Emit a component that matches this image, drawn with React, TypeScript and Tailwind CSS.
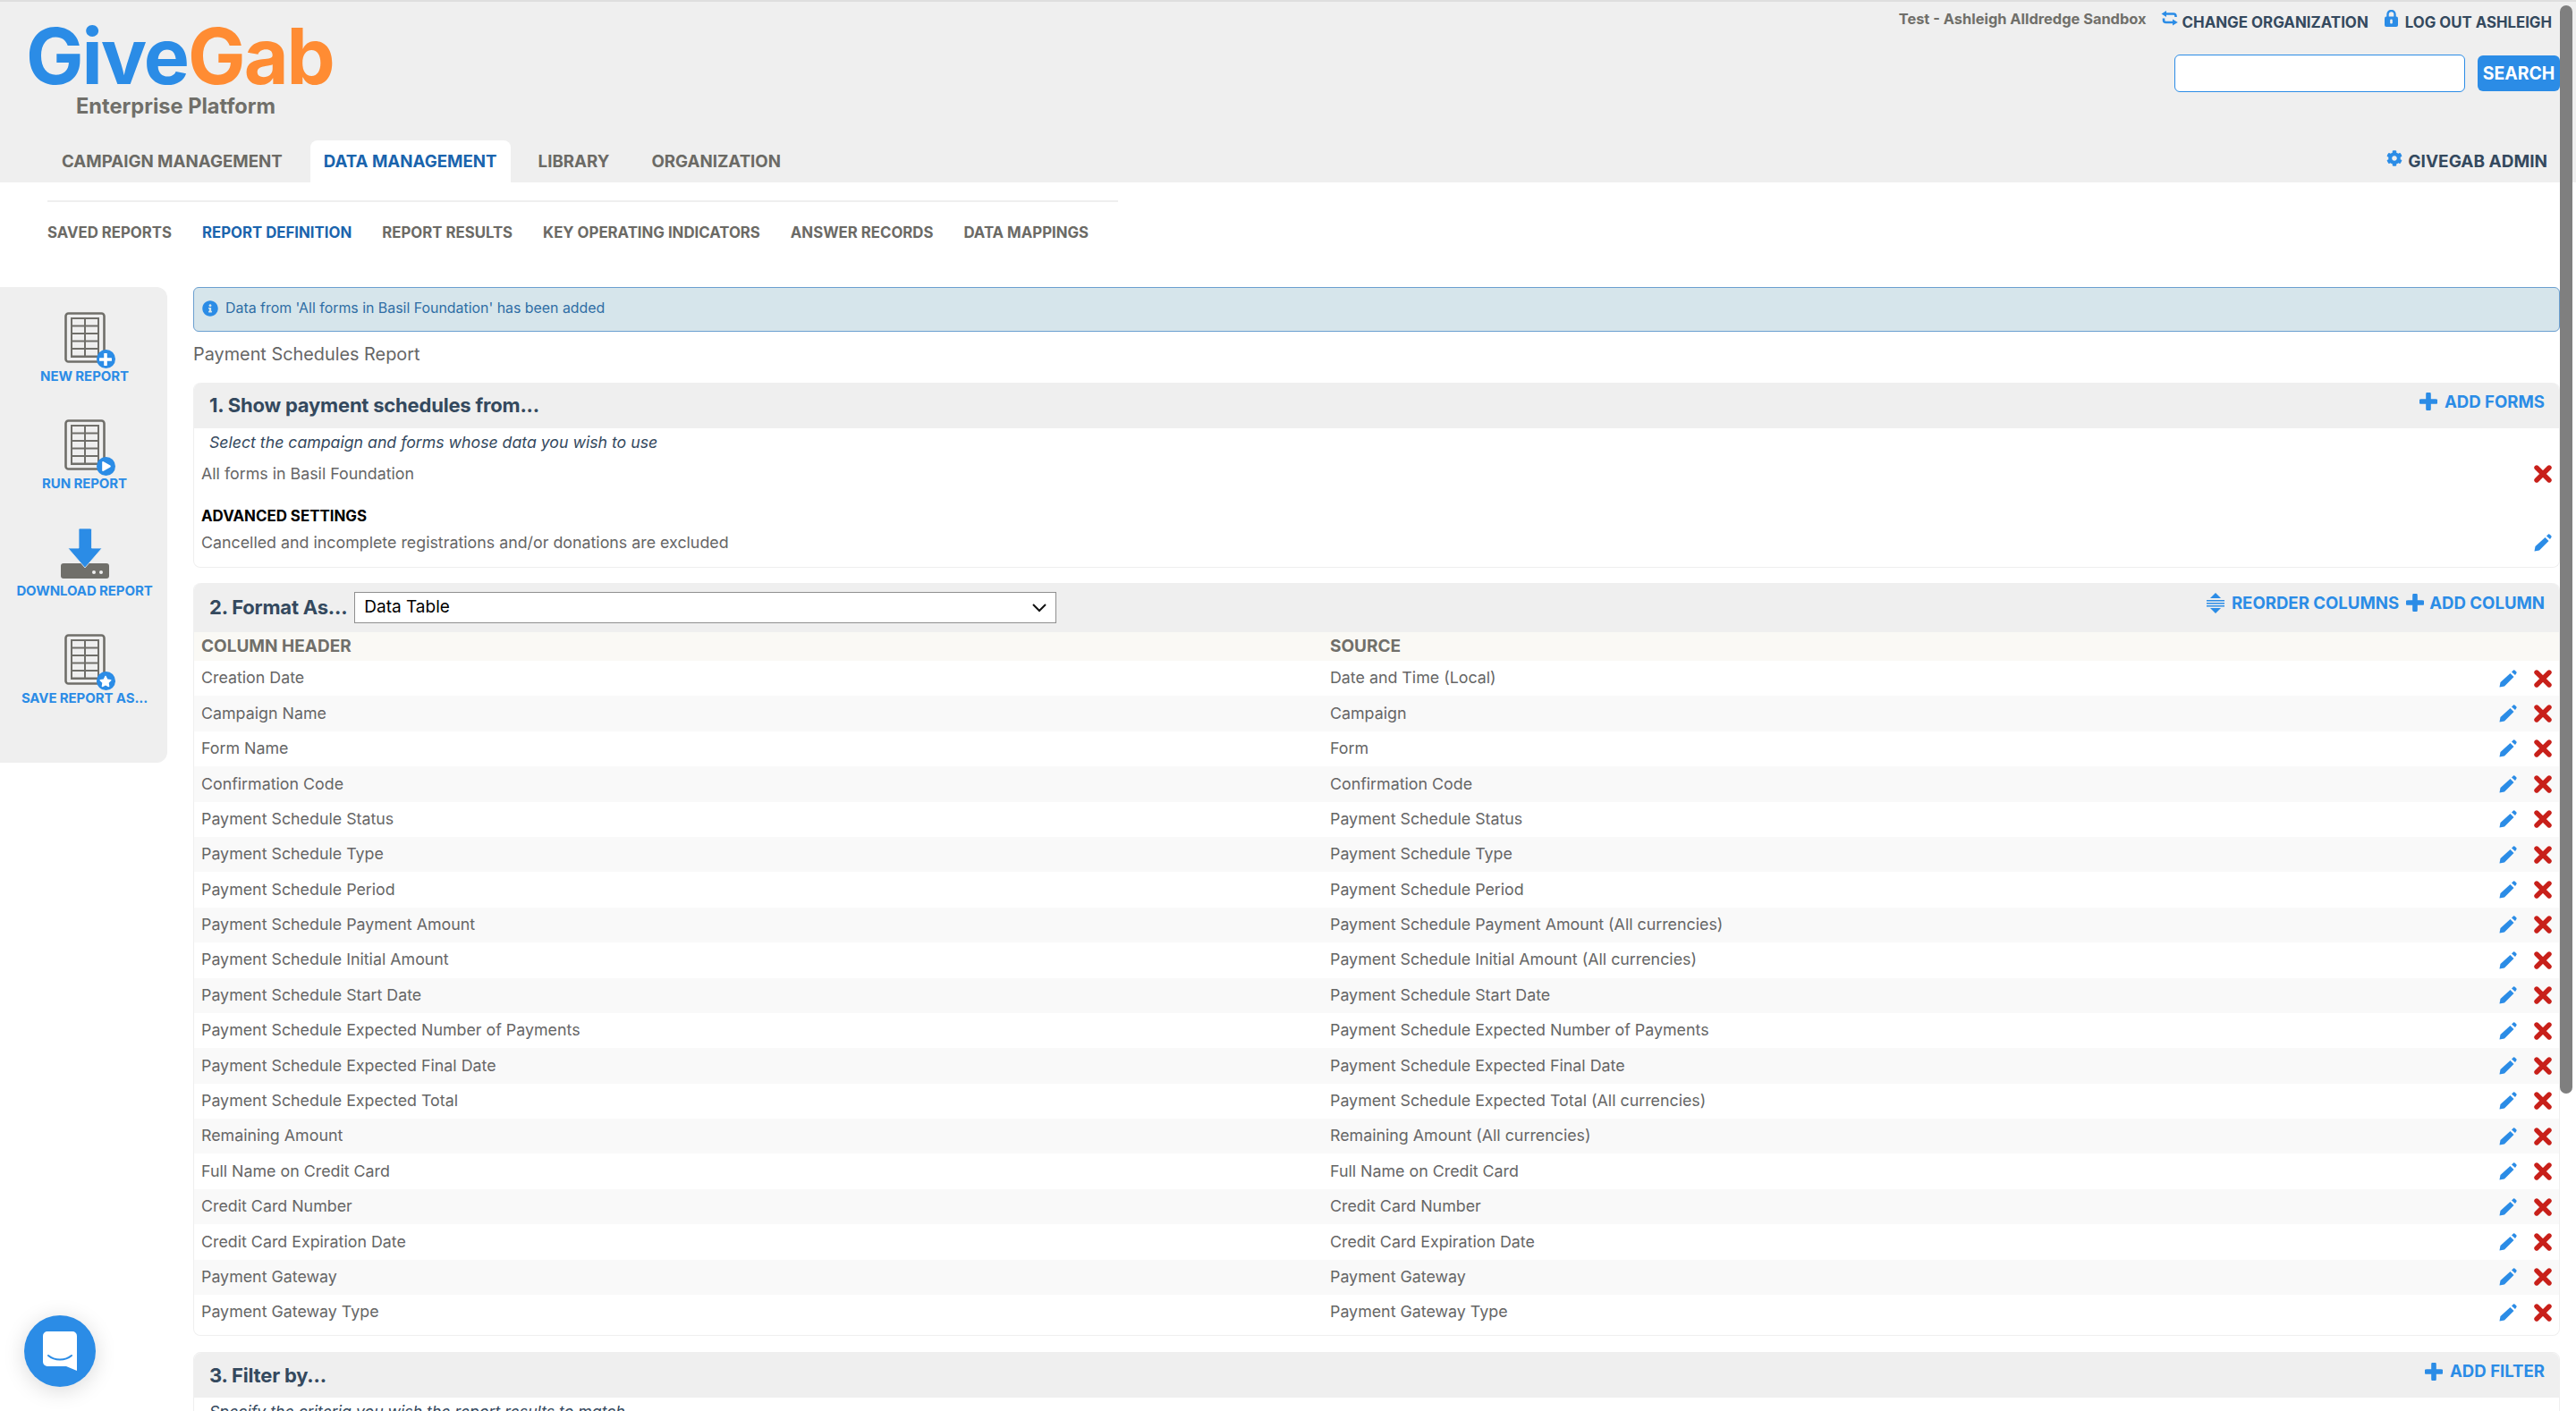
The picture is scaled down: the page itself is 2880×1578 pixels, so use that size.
import React from "react";
import { FaCog, FaInfoCircle, FaStar, FaPlay } from "react-icons/fa";

const rows: [string, string][] = [
  ["Creation Date", "Date and Time (Local)"],
  ["Campaign Name", "Campaign"],
  ["Form Name", "Form"],
  ["Confirmation Code", "Confirmation Code"],
  ["Payment Schedule Status", "Payment Schedule Status"],
  ["Payment Schedule Type", "Payment Schedule Type"],
  ["Payment Schedule Period", "Payment Schedule Period"],
  ["Payment Schedule Payment Amount", "Payment Schedule Payment Amount (All currencies)"],
  ["Payment Schedule Initial Amount", "Payment Schedule Initial Amount (All currencies)"],
  ["Payment Schedule Start Date", "Payment Schedule Start Date"],
  ["Payment Schedule Expected Number of Payments", "Payment Schedule Expected Number of Payments"],
  ["Payment Schedule Expected Final Date", "Payment Schedule Expected Final Date"],
  ["Payment Schedule Expected Total", "Payment Schedule Expected Total (All currencies)"],
  ["Remaining Amount", "Remaining Amount (All currencies)"],
  ["Full Name on Credit Card", "Full Name on Credit Card"],
  ["Credit Card Number", "Credit Card Number"],
  ["Credit Card Expiration Date", "Credit Card Expiration Date"],
  ["Payment Gateway", "Payment Gateway"],
  ["Payment Gateway Type", "Payment Gateway Type"],
];

function PlusBadge() {
  return (
    <svg width="14" height="14" viewBox="0 0 14 14">
      <path d="M7 1v12M1 7h12" stroke="#fff" strokeWidth="3.6" strokeLinecap="round" />
    </svg>
  );
}

function ReportIcon({ badge }: { badge: React.ReactNode }) {
  return (
    <div className="relative w-[68px] h-[58px]">
      <svg width="46" height="57" viewBox="0 0 46 57" className="absolute left-[11px] top-0">
        <rect x="1.5" y="1.5" width="43" height="54" rx="3" fill="#efefef" stroke="#706f6a" strokeWidth="2.6" />
        <rect x="7" y="6" width="32" height="45" fill="#706f6a" />
        {[0, 1, 2, 3, 4].map((i) => (
          <React.Fragment key={i}>
            <rect x="9" y={8 + i * 8.5} width="13" height="6.5" fill="#efefef" />
            <rect x="24" y={8 + i * 8.5} width="13" height="6.5" fill="#efefef" />
          </React.Fragment>
        ))}
      </svg>
      <div className="absolute left-[47px] top-[42px] w-[21px] h-[21px] rounded-full bg-[#2b8ce6] flex items-center justify-center text-white">
        {badge}
      </div>
    </div>
  );
}

function DownloadIcon() {
  return (
    <svg width="54" height="56" viewBox="0 0 54 56">
      <path d="M3 39h48a3 3 0 0 1 3 3v11a3 3 0 0 1-3 3H3a3 3 0 0 1-3-3V42a3 3 0 0 1 3-3z" fill="#706f6a" />
      <circle cx="37" cy="49" r="2" fill="#efefef" />
      <circle cx="45" cy="49" r="2" fill="#efefef" />
      <path d="M21 0h12a1.5 1.5 0 0 1 1.5 1.5V22H46L27 44 8 22h12V1.5A1.5 1.5 0 0 1 21 0z" fill="#2b8ce6" stroke="#efefef" strokeWidth="0.8" />
    </svg>
  );
}

function SideItem({ icon, label }: { icon: React.ReactNode; label: string }) {
  return (
    <div className="h-[120px] flex flex-col items-center pl-[2px]">
      <div className="h-[58px] flex items-end">{icon}</div>
      <div className="mt-[5px] text-[15px] leading-[18px] font-bold text-[#2b8ce6] tracking-[-0.1px] whitespace-nowrap">{label}</div>
    </div>
  );
}

function ReorderIcon() {
  return (
    <svg width="20" height="23" viewBox="0 0 20 23" className="mr-[8px]">
      <path d="M10 0l6 6H4z" fill="#2b8ce6" />
      <path d="M10 23l-6-6h12z" fill="#2b8ce6" />
      <rect x="0" y="8" width="20" height="1.5" fill="#2b8ce6" />
      <rect x="0" y="11" width="20" height="1.5" fill="#2b8ce6" />
      <rect x="0" y="14" width="20" height="1.5" fill="#2b8ce6" />
    </svg>
  );
}

function Plus({ className }: { className?: string }) {
  return (
    <svg width="20" height="20" viewBox="0 0 20 20" className={className}>
      <path d="M10 2v16M2 10h16" stroke="#2b8ce6" strokeWidth="5.6" strokeLinecap="round" />
    </svg>
  );
}

function Pencil() {
  return (
    <svg width="20" height="20" viewBox="0 0 20 20">
      <path d="M0.5 19.5L1.5 14 12.5 4 16.5 8 6 18.5Z" fill="#2b8ce6" />
      <path d="M14 2.5L16 .5Q17 0 18 1L19.5 2.5Q20 3.5 19 4.5L18 6Z" fill="#2b8ce6" />
    </svg>
  );
}
function Cross() {
  return (
    <svg width="20" height="20" viewBox="0 0 20 20">
      <path d="M3 3l14 14M17 3L3 17" stroke="#c8201a" strokeWidth="5.4" strokeLinecap="round" />
    </svg>
  );
}

function ChangeIcon() {
  return (
    <svg width="19" height="17" viewBox="0 0 19 17" className="mt-[10px] mr-[5px]">
      <path d="M5 3.5h9q2.5 0 2.5 2.5v1" fill="none" stroke="#2b8ce6" strokeWidth="2.6" />
      <path d="M0.5 3.5L6 0v7z" fill="#2b8ce6" />
      <path d="M3 8.5v2q0 2.5 2.5 2.5H14" fill="none" stroke="#2b8ce6" strokeWidth="2.6" />
      <path d="M18.8 13L13 9.5v7z" fill="#2b8ce6" />
    </svg>
  );
}

function LockIcon() {
  return (
    <svg width="15" height="19" viewBox="0 0 15 19" className="mt-[9px] mr-[8px]">
      <path d="M3.5 8V5a4 4 0 0 1 8 0v3" fill="none" stroke="#2b8ce6" strokeWidth="2.4" />
      <rect x="0" y="7.5" width="15" height="11.5" rx="2" fill="#2b8ce6" />
      <rect x="6.2" y="10.5" width="2.6" height="5" rx="1.3" fill="#efefef" />
    </svg>
  );
}

function PanelHeader({ title, h, lift, children }: { title: React.ReactNode; h: string; lift: string; children?: React.ReactNode }) {
  return (
    <div className={`${h} bg-[#efefef] rounded-t-[8px] flex items-center justify-between pl-[17px] pr-[16px]`}>
      {title}
      <div className={`flex items-center text-[18.6px] font-bold text-[#2b8ce6] ${lift} whitespace-nowrap`}>{children}</div>
    </div>
  );
}

const headingCls = "text-[22px] font-bold text-[#34495e] tracking-[-0.2px] whitespace-nowrap";

export default function App() {
  return (
    <div className="relative w-[2880px] h-[1578px] overflow-hidden bg-white text-[#666] text-[17.82px] font-['Inter','Liberation_Sans',sans-serif]">
      {/* header */}
      <header className="h-[204px] bg-[#efefef] border-t-2 border-[#dedede] flex flex-col">
        <div className="flex justify-between h-[155px] pr-[18px]">
          <div className="pl-[29px] pt-[26px]">
            <div className="h-[70px] text-[86px] font-bold tracking-[-2px] whitespace-nowrap flex">
              <span className="block leading-[70px] text-[#2b8ce6]">Give</span>
              <span className="block leading-[70px] text-[#ff8c33]">Gab</span>
            </div>
            <div className="pl-[56px] pt-[7px] text-[23.6px] leading-[28px] font-bold text-[#706f6a] whitespace-nowrap">Enterprise Platform</div>
          </div>
          <div className="flex flex-col items-end">
            <div className="flex items-start h-[59px] whitespace-nowrap pr-[9px]">
              <span className="text-[16.4px] leading-[18px] mt-[10px] font-bold text-[#706f6a] mr-[16px]">Test - Ashleigh Alldredge Sandbox</span>
              <ChangeIcon />
              <span className="text-[16.9px] leading-[20px] mt-[13px] font-bold text-[#34495e] mr-[18px]">CHANGE ORGANIZATION</span>
              <LockIcon />
              <span className="text-[16.8px] leading-[20px] mt-[13px] font-bold text-[#34495e]">LOG OUT ASHLEIGH</span>
            </div>
            <div className="flex items-center">
              <input className="w-[325px] h-[42px] bg-white border border-[#2b8ce6] rounded-[6px] mr-[14px]" />
              <button className="w-[92px] h-[40px] pt-[2px] bg-[#2b8ce6] rounded-[6px] text-white font-bold text-[19.4px]">SEARCH</button>
            </div>
          </div>
        </div>
        <div className="flex justify-between items-stretch h-[47px] pl-[53px] pr-[32px] text-[18.7px] font-bold">
          <nav className="flex gap-[15px] whitespace-nowrap">
            <div className="px-[16px] pt-[10px] text-[#6b6a65]">CAMPAIGN MANAGEMENT</div>
            <div className="px-[15px] pt-[10px] bg-white rounded-t-[8px] text-[#1a64ad]">DATA MANAGEMENT</div>
            <div className="px-[16px] pt-[10px] text-[#6b6a65]">LIBRARY</div>
            <div className="px-[16px] pt-[10px] text-[#6b6a65]">ORGANIZATION</div>
          </nav>
          <div className="flex items-start pt-[10px] whitespace-nowrap text-[19px] text-[#34495e]">
            <FaCog className="w-[18px] h-[20px] mr-[6px] text-[#2b8ce6]" />
            GIVEGAB ADMIN
          </div>
        </div>
      </header>

      {/* subnav */}
      <div className="ml-[53px] mt-[20px] w-[1197px] border-t-2 border-[#efefef]">
        <div className="flex gap-[34px] pt-[24px] text-[16.8px] leading-[20px] font-bold text-[#6b6a65] whitespace-nowrap">
          <span>SAVED REPORTS</span>
          <span className="text-[#1a64ad]">REPORT DEFINITION</span>
          <span>REPORT RESULTS</span>
          <span>KEY OPERATING INDICATORS</span>
          <span>ANSWER RECORDS</span>
          <span>DATA MAPPINGS</span>
        </div>
      </div>

      <div className="flex mt-[51px] items-start">
        {/* sidebar */}
        <aside className="w-[187px] h-[532px] shrink-0 bg-[#efefef] rounded-r-[12px] pt-[28px]">
          <SideItem label="NEW REPORT" icon={<ReportIcon badge={<PlusBadge />} />} />
          <SideItem label="RUN REPORT" icon={<ReportIcon badge={<FaPlay className="w-[10px] h-[11px] ml-[2px]" />} />} />
          <SideItem label="DOWNLOAD REPORT" icon={<DownloadIcon />} />
          <SideItem label="SAVE REPORT AS..." icon={<ReportIcon badge={<FaStar className="w-[14px] h-[14px]" />} />} />
        </aside>

        {/* main */}
        <main className="ml-[29px] w-[2646px]">
          <div className="h-[50px] bg-[#d6e5eb] border border-[#6b9fd0] rounded-[6px] flex items-center pl-[9px] pb-[3px] text-[15.9px] text-[#2f6ea5]">
            <FaInfoCircle className="w-[18px] h-[18px] text-[#2b8ce6] mr-[8px]" />
            Data from 'All forms in Basil Foundation' has been added
          </div>
          <div className="mt-[14px] h-[22px] leading-[22px] text-[19.85px]">Payment Schedules Report</div>

          <section className="mt-[21px] border-b border-x border-[#efefef] rounded-[8px] h-[207px]">
            <PanelHeader h="h-[51px]" lift="-translate-y-[4px]" title={<span className={headingCls}>1. Show payment schedules from...</span>}>
              <Plus className="mr-[8px]" />ADD FORMS
            </PanelHeader>
            <div className="pl-[8px] pr-[8px]">
              <div className="pl-[9px] mt-[5px] h-[22px] leading-[22px] italic text-[17.7px] text-[#34495e]">Select the campaign and forms whose data you wish to use</div>
              <div className="mt-[13px] h-[22px] leading-[22px] flex items-center justify-between">
                All forms in Basil Foundation
                <Cross />
              </div>
              <div className="mt-[25px] h-[22px] leading-[22px] text-[16.9px] font-bold text-black">ADVANCED SETTINGS</div>
              <div className="mt-[8px] h-[22px] leading-[22px] flex items-center justify-between">
                Cancelled and incomplete registrations and/or donations are excluded
                <Pencil />
              </div>
            </div>
          </section>

          <section className="mt-[17px] border-b border-x border-[#efefef] rounded-[8px]">
            <PanelHeader
              h="h-[55px]"
              lift="-translate-y-[5px]"
              title={
                <div className="flex items-center">
                  <span className={headingCls}>2. Format As...</span>
                  <div className="ml-[8px] w-[785px] h-[35px] bg-white border border-[#8f8f8f] flex items-center justify-between pl-[10px] pr-[10px] text-[19px] font-normal text-black">
                    Data Table
                    <svg width="16" height="10" viewBox="0 0 16 10"><path d="M1 1l7 7 7-7" fill="none" stroke="#111" strokeWidth="2" /></svg>
                  </div>
                </div>
              }
            >
              <ReorderIcon />REORDER COLUMNS
              <Plus className="ml-[8px] mr-[6px]" />ADD COLUMN
            </PanelHeader>
            <div className="h-[32px] bg-[#faf9f5] flex items-center pl-[8px] text-[19px] font-bold text-[#706f6a]">
              <div className="w-[1262px]">COLUMN HEADER</div>
              <div>SOURCE</div>
            </div>
            {rows.map(([a, b], i) => (
              <div key={a} className={`h-[39.4px] flex items-center pl-[8px] ${i % 2 === 1 ? "bg-[#f9f9f9]" : ""}`}>
                <div className="w-[1262px] shrink-0">{a}</div>
                <div className="flex-1">{b}</div>
                <div className="w-[20px] mr-[19px]"><Pencil /></div>
                <div className="w-[20px] mr-[8px]"><Cross /></div>
              </div>
            ))}
            <div className="h-[6px]" />
          </section>

          <section className="mt-[18px] border border-[#efefef] rounded-[8px]">
            <PanelHeader h="h-[50px]" lift="-translate-y-[4px]" title={<span className={headingCls}>3. Filter by...</span>}>
              <Plus className="mr-[8px]" />ADD FILTER
            </PanelHeader>
            <div className="pl-[17px] mt-[5px] h-[22px] leading-[22px] italic text-[17.7px] text-[#34495e]">Specify the criteria you wish the report results to match</div>
          </section>
        </main>
      </div>

      {/* scrollbar overlay */}
      <div className="absolute left-[2862px] top-[6px] w-[14px] h-[1217px] rounded-[7px] bg-[#7f7f7f]" />

      {/* chat launcher */}
      <div className="absolute left-[27px] top-[1471px] w-[80px] h-[80px] rounded-full bg-[#2b8ce6] shadow-[0_4px_24px_rgba(0,0,0,0.15)] flex items-center justify-center">
        <svg width="38" height="44" viewBox="0 0 38 44">
          <path d="M5 0h28a5 5 0 0 1 5 5v39l-12-5H5a5 5 0 0 1-5-5V5a5 5 0 0 1 5-5z" fill="#fff" />
          <path d="M6 27c7 6 19 6 26 0" fill="none" stroke="#2b8ce6" strokeWidth="2" strokeLinecap="round" />
        </svg>
      </div>
    </div>
  );
}
